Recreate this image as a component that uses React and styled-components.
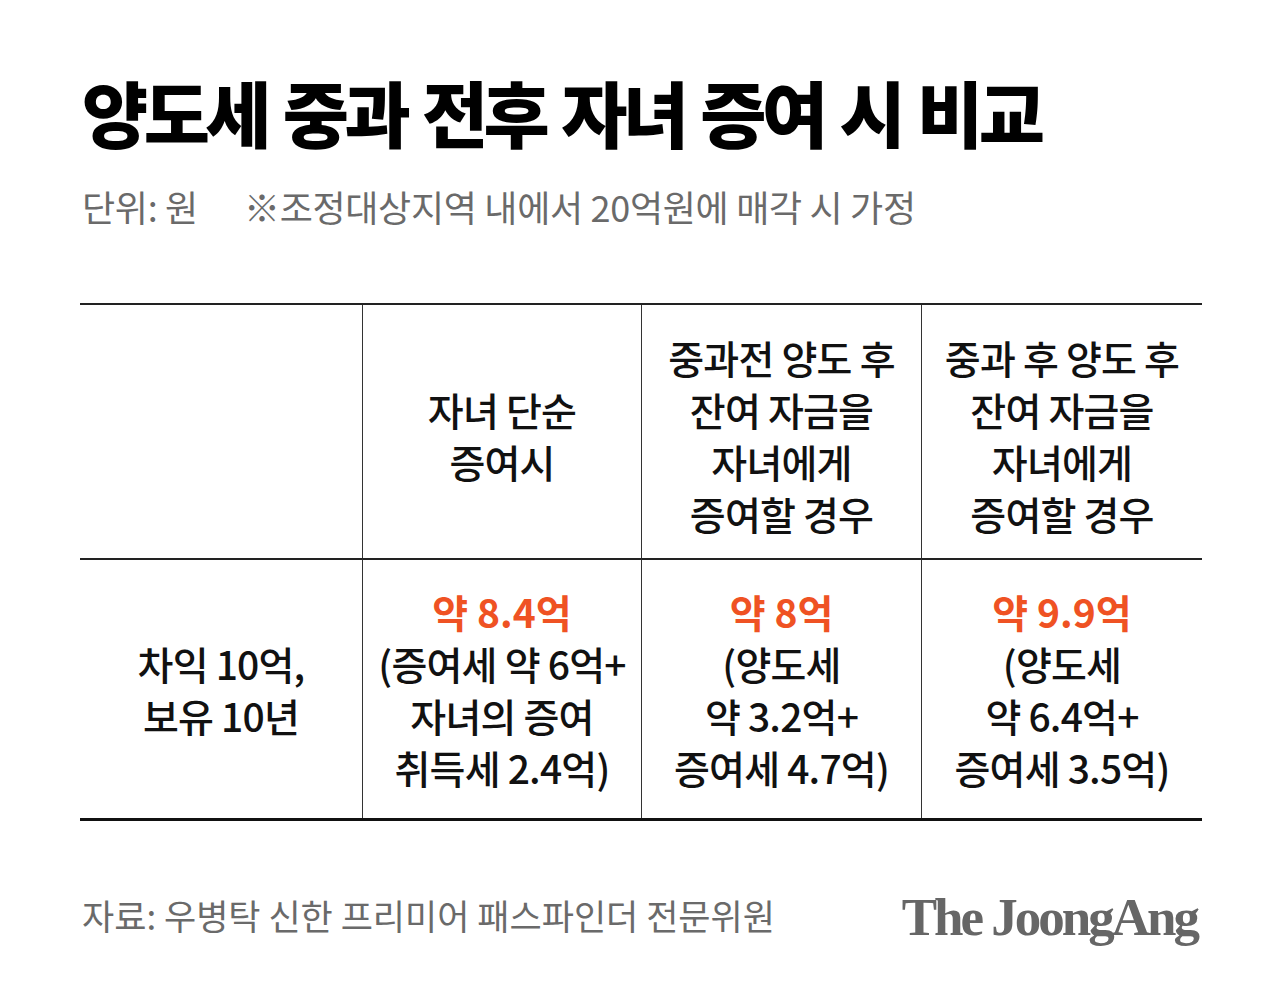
import React from "react";
import styled, { createGlobalStyle } from "styled-components";

const Global = createGlobalStyle`
  html, body { margin: 0; padding: 0; background: #ffffff; }
  body { font-family: "Noto Sans CJK KR", "Noto Sans", sans-serif; }
`;

const Page = styled.div`
  width: 1287px;
  height: 992px;
  box-sizing: border-box;
  padding: 66px 85px 0 80px;
  display: flex;
  flex-direction: column;
  background: #fff;
`;

const Title = styled.h1`
  margin: 0 0 0 2px;
  font-size: 72px;
  line-height: 90px;
  font-weight: 900;
  letter-spacing: -4.6px;
  word-spacing: 4px;
  color: #000;
`;

const SubRow = styled.div`
  display: flex;
  align-items: baseline;
  gap: 46px;
  margin: 28px 0 0 2px;
  font-size: 36px;
  line-height: 44px;
  color: #6a6a6a;
  letter-spacing: -0.3px;
`;

const Table = styled.div`
  margin-top: 75px;
  display: grid;
  grid-template-columns: 282px 279px 280px 281px;
  grid-template-rows: 253px 260px;
  border-top: 2px solid #222;
  border-bottom: 3px solid #111;
`;

const Cell = styled.div`
  display: flex;
  flex-direction: column;
  align-items: center;
  justify-content: center;
  text-align: center;
  border-left: ${(p) => (p.$first ? "none" : "1px solid #333")};
  border-top: ${(p) => (p.$body ? "2px solid #222" : "none")};
  font-size: 39px;
  line-height: 52px;
  font-weight: 500;
  letter-spacing: -0.8px;
  color: #111;
  padding-top: ${(p) => (p.$body ? "0" : "6px")};
`;

const Line = styled.div`
  white-space: nowrap;
`;

const Accent = styled.div`
  white-space: nowrap;
  color: #ef5223;
  font-weight: 700;
  font-size: 39px;
  letter-spacing: 0;
`;

const Footer = styled.div`
  margin-top: 66px;
  display: flex;
  align-items: center;
  justify-content: space-between;
  padding: 0 0 0 2px;
`;

const Source = styled.div`
  font-size: 35px;
  line-height: 40px;
  color: #6a6a6a;
  letter-spacing: 0;
`;

const Logo = styled.div`
  font-family: "Liberation Serif", "Times New Roman", serif;
  font-weight: 700;
  font-size: 53px;
  line-height: 52px;
  letter-spacing: -3px;
  color: #666;
  margin: 4px 5px 0 0;
`;

const header = [
  null,
  ["자녀 단순", "증여시"],
  ["중과전 양도 후", "잔여 자금을", "자녀에게", "증여할 경우"],
  ["중과 후 양도 후", "잔여 자금을", "자녀에게", "증여할 경우"],
];

const body = [
  { lines: ["차익 10억,", "보유 10년"] },
  { accent: "약 8.4억", lines: ["(증여세 약 6억+", "자녀의 증여", "취득세 2.4억)"] },
  { accent: "약 8억", lines: ["(양도세", "약 3.2억+", "증여세 4.7억)"] },
  { accent: "약 9.9억", lines: ["(양도세", "약 6.4억+", "증여세 3.5억)"] },
];

export default function App() {
  return (
    <>
      <Global />
      <Page>
        <Title>양도세 중과 전후 자녀 증여 시 비교</Title>
        <SubRow>
          <span>단위: 원</span>
          <span>※조정대상지역 내에서 20억원에 매각 시 가정</span>
        </SubRow>
        <Table>
          {header.map((h, i) => (
            <Cell key={"h" + i} $first={i === 0}>
              {h && h.map((l) => <Line key={l}>{l}</Line>)}
            </Cell>
          ))}
          {body.map((b, i) => (
            <Cell key={"b" + i} $first={i === 0} $body>
              {b.accent && <Accent>{b.accent}</Accent>}
              {b.lines.map((l) => (
                <Line key={l}>{l}</Line>
              ))}
            </Cell>
          ))}
        </Table>
        <Footer>
          <Source>자료: 우병탁 신한 프리미어 패스파인더 전문위원</Source>
          <Logo>The JoongAng</Logo>
        </Footer>
      </Page>
    </>
  );
}
